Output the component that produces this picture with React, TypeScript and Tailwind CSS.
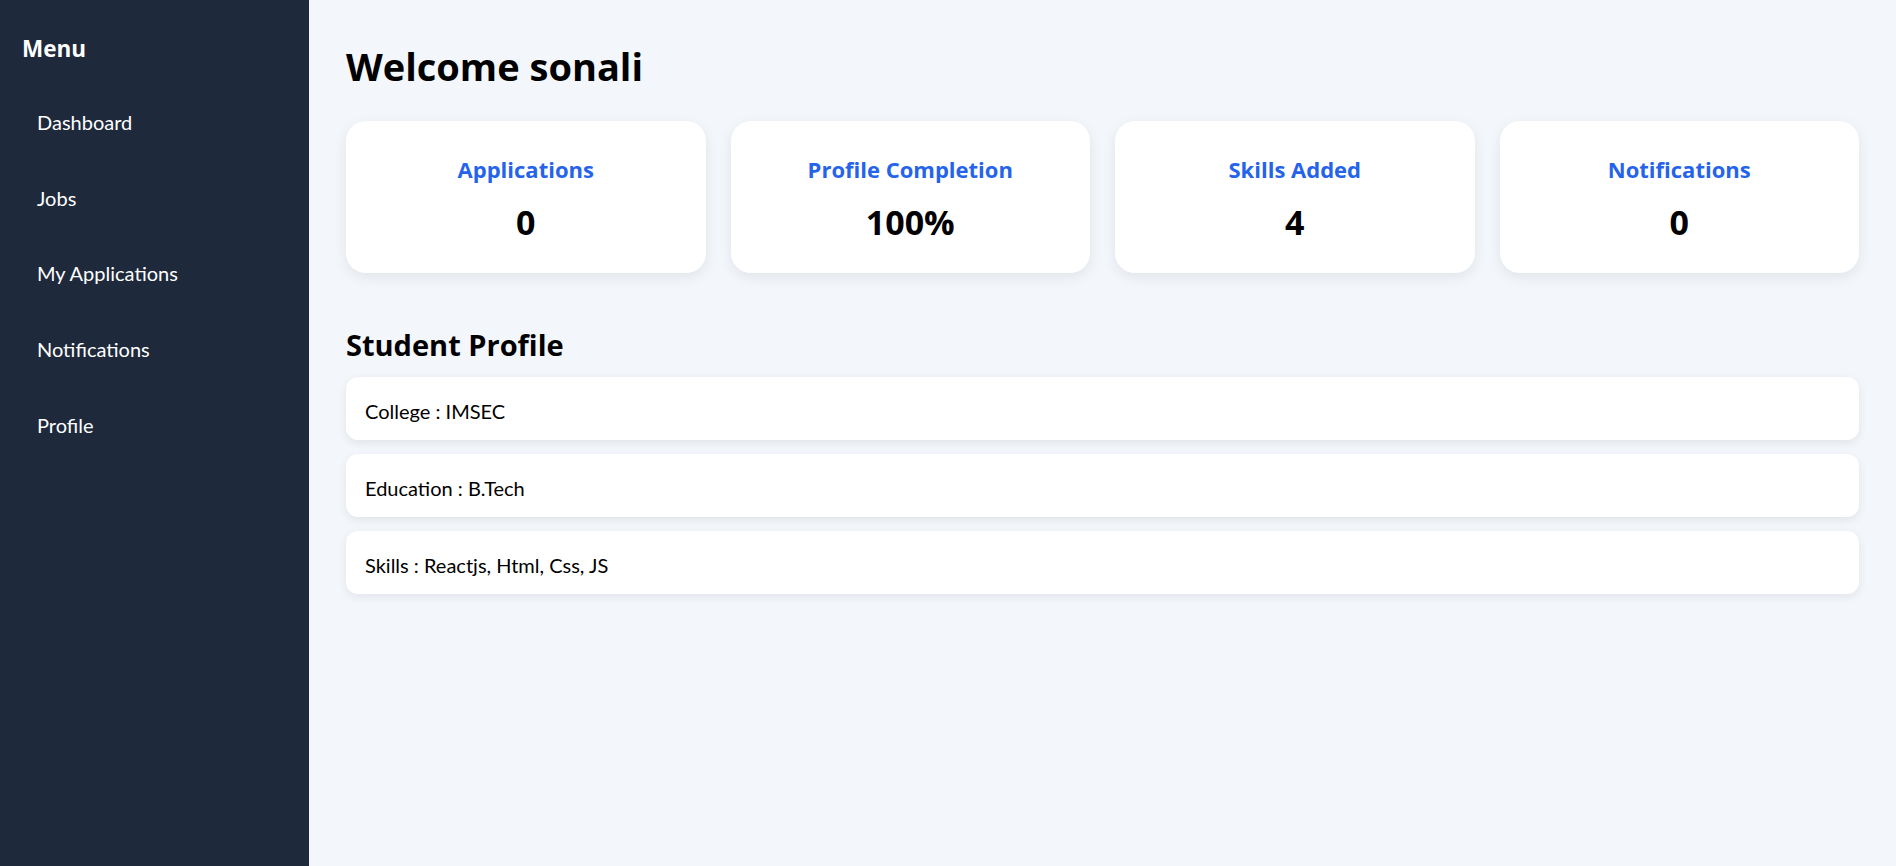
const menu = ["Dashboard", "Jobs", "My Applications", "Notifications", "Profile"];

const stats = [
  { label: "Applications", value: "0" },
  { label: "Profile Completion", value: "100%" },
  { label: "Skills Added", value: "4" },
  { label: "Notifications", value: "0" },
];

const profile = ["College : IMSEC", "Education : B.Tech", "Skills : Reactjs, Html, Css, JS"];

export default function App() {
  return (
    <div className="flex h-[866px] bg-[#f3f6fa] font-['Lato','Liberation_Sans',sans-serif] text-black">
      {/* Sidebar */}
      <aside className="w-[309px] shrink-0 bg-[#1e293b] text-white pl-[22px] pt-[34px]">
        <h2 className="font-['Open_Sans',sans-serif] text-[22.5px] leading-[30px] font-bold">Menu</h2>
        <ul className="mt-[20px] pl-[15px]">
          {menu.map((item) => (
            <li key={item} className="h-[75.75px] flex items-center text-[20px] leading-[24px]">
              {item}
            </li>
          ))}
        </ul>
      </aside>

      {/* Main */}
      <main className="flex-1 px-[37px] pt-[43px]">
        <h1 className="font-['Open_Sans',sans-serif] text-[38px] leading-[46px] font-bold">Welcome sonali</h1>

        <div className="mt-[32px] grid grid-cols-4 gap-[25px]">
          {stats.map((s) => (
            <div
              key={s.label}
              className="h-[152px] bg-white rounded-[20px] shadow-[0_4px_14px_rgba(15,23,42,0.08)] flex flex-col items-center pt-[34px] font-['Open_Sans',sans-serif]"
            >
              <p className="text-[22px] leading-[28px] font-bold text-[#2563eb]">{s.label}</p>
              <p className="mt-[19px] text-[34px] leading-[40px] font-bold">{s.value}</p>
            </div>
          ))}
        </div>

        <h2 className="mt-[54px] font-['Open_Sans',sans-serif] text-[29px] leading-[36px] font-bold">Student Profile</h2>

        <div className="mt-[14px] flex flex-col gap-[14px]">
          {profile.map((p) => (
            <div
              key={p}
              className="bg-white rounded-[12px] shadow-[0_3px_10px_rgba(15,23,42,0.08)] px-[19px] pt-[22px] pb-[17px] text-[20px] leading-[24px]"
            >
              {p}
            </div>
          ))}
        </div>
      </main>
    </div>
  );
}
